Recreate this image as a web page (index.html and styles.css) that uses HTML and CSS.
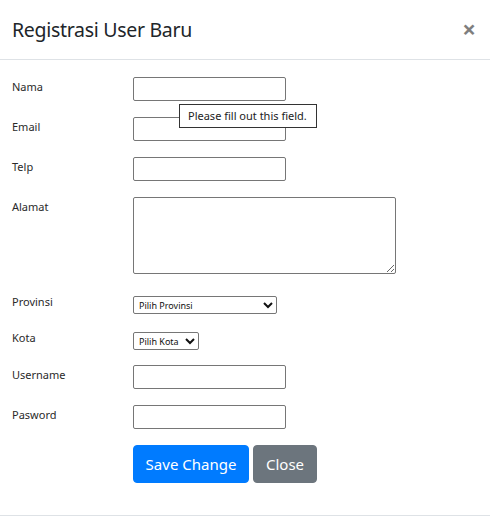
FILE: index.html
```html
<!DOCTYPE html>
<html lang="id">
<head>
<meta charset="utf-8">
<title>Registrasi User Baru</title>
<link rel="stylesheet" href="styles.css">
</head>
<body>
<div class="modal">
  <div class="modal-header">
    <h5 class="modal-title">Registrasi User Baru</h5>
    <button type="button" class="close" aria-label="Close">&times;</button>
  </div>
  <div class="modal-body">
    <form class="form">
      <div class="row">
        <label class="label">Nama</label>
        <input class="field" type="text">
      </div>
      <div class="row row-tip">
        <label class="label">Email</label>
        <input class="field" type="text">
        <div class="tooltip">Please fill out this field.</div>
      </div>
      <div class="row">
        <label class="label">Telp</label>
        <input class="field" type="text">
      </div>
      <div class="row row-area">
        <label class="label">Alamat</label>
        <textarea class="area"></textarea>
      </div>
      <div class="row row-sel row-prov">
        <label class="label">Provinsi</label>
        <select class="sel sel-prov"><option>Pilih Provinsi</option></select>
      </div>
      <div class="row row-sel row-kota">
        <label class="label">Kota</label>
        <select class="sel sel-kota"><option>Pilih Kota</option></select>
      </div>
      <div class="row">
        <label class="label">Username</label>
        <input class="field" type="text">
      </div>
      <div class="row">
        <label class="label">Pasword</label>
        <input class="field" type="password">
      </div>
      <div class="actions">
        <button type="button" class="btn btn-primary">Save Change</button>
        <button type="button" class="btn btn-secondary">Close</button>
      </div>
    </form>
  </div>
  <div class="modal-footer"></div>
</div>
</body>
</html>
```

FILE: styles.css
```css
* { box-sizing: border-box; }
html, body { margin: 0; padding: 0; background: #fff; }
body {
  font-family: "Noto Sans", "Open Sans", "Liberation Sans", sans-serif;
  color: #212529;
}
.modal { width: 490px; min-height: 531px; background: #fff; }
.modal-header {
  height: 60px;
  display: flex;
  align-items: center;
  justify-content: space-between;
  padding: 0 14px 0 12px;
  border-bottom: 1px solid #dee2e6;
}
.modal-title {
  margin: 0;
  font-size: 19.5px;
  letter-spacing: -0.3px;
  font-weight: 400;
  line-height: 24px;
  color: #212529;
  padding-top: 1px;
}
.close {
  border: 0;
  background: transparent;
  padding: 0;
  font-family: "Noto Sans", sans-serif;
  font-size: 24px;
  font-weight: 700;
  line-height: 1;
  color: #000;
  opacity: .5;
  margin-top: -2px;
}
.modal-body { padding: 17px 12px 32px; }
.row {
  position: relative;
  display: flex;
  align-items: flex-start;
  margin-bottom: 16px;
}
.label {
  width: 121px;
  flex: none;
  font-size: 11px;
  line-height: 18px;
  padding-top: 1px;
  color: #2a2a2a;
}
.row-sel .label { margin-top: -3px; padding-top: 0; }
.row-area { margin-bottom: 22px; }
.row-prov { margin-bottom: 18px; }
.row-kota { margin-bottom: 15px; }
.field {
  width: 153px;
  height: 24px;
  border: 1px solid #767676;
  border-radius: 2px;
  padding: 1px 2px;
  font-size: 13px;
  background: #fff;
}
.area {
  width: 263px;
  height: 77px;
  border: 1px solid #767676;
  border-radius: 2px;
  font-size: 13px;
  display: block;
}
.sel {
  height: 18px;
  font-size: 9px;
  font-family: "Noto Sans", sans-serif;
  border: 1px solid #767676;
  border-radius: 2px;
  padding: 0 0 0 1px;
  background: #fff;
  color: #111;
}
.sel-prov { width: 144px; }
.sel-kota { width: 66px; }
.tooltip {
  position: absolute;
  left: 167px;
  top: -13px;
  width: 138px;
  height: 24px;
  padding: 0 8px;
  border: 1px solid #333;
  background: #fff;
  font-size: 11px;
  line-height: 22px;
  color: #222;
  white-space: nowrap;
}
.actions {
  display: flex;
  gap: 4px;
  padding-left: 121px;
}
.btn {
  height: 38px;
  padding: 0;
  border: 1px solid transparent;
  border-radius: 4px;
  font-family: "Noto Sans", sans-serif;
  font-size: 15px;
  color: #fff;
  line-height: 36px;
  text-align: center;
}
.btn-primary { width: 116px; background: #007bff; border-color: #007bff; }
.btn-secondary { width: 64px; background: #6c757d; border-color: #6c757d; }
.modal-footer { border-top: 1px solid #dee2e6; height: 15px; }
```
